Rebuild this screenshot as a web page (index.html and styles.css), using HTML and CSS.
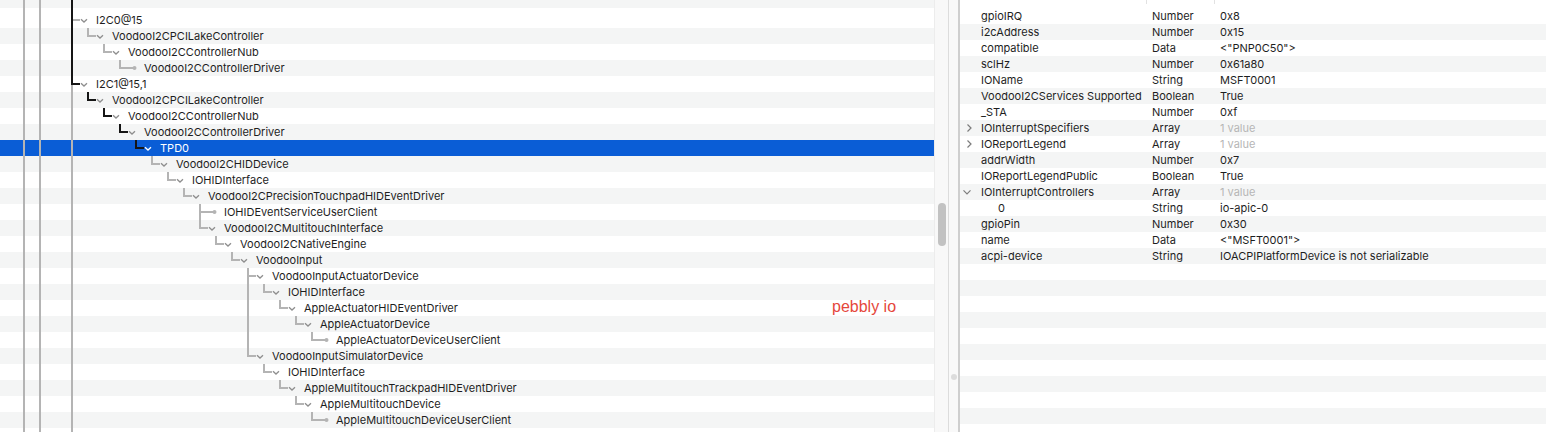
FILE: index.html
```html
<!DOCTYPE html>
<html>
<head>
<meta charset="utf-8">
<link rel="stylesheet" href="styles.css">
</head>
<body>
<div class="app">
  <div class="tree">
    <div class="toprow"><i class="g"></i><i class="g v"></i><i class="g v"></i><i class="g"></i><i class="g vd"></i></div>
    <div class="rows">
      <div class="row"><i class="g"></i><i class="g v"></i><i class="g v"></i><i class="g"></i><i class="g x"></i><i class="tw"><svg viewBox="0 0 16 16"><path d="M1 7.3l3 2.8 3-2.8"/></svg></i><span class="lbl">I2C0@15</span></div>
      <div class="row"><i class="g"></i><i class="g v"></i><i class="g v"></i><i class="g"></i><i class="g vd"></i><i class="g l"></i><i class="tw"><svg viewBox="0 0 16 16"><path d="M1 7.3l3 2.8 3-2.8"/></svg></i><span class="lbl">VoodooI2CPCILakeController</span></div>
      <div class="row"><i class="g"></i><i class="g v"></i><i class="g v"></i><i class="g"></i><i class="g vd"></i><i class="g"></i><i class="g l"></i><i class="tw"><svg viewBox="0 0 16 16"><path d="M1 7.3l3 2.8 3-2.8"/></svg></i><span class="lbl">VoodooI2CControllerNub</span></div>
      <div class="row"><i class="g"></i><i class="g v"></i><i class="g v"></i><i class="g"></i><i class="g vd"></i><i class="g"></i><i class="g"></i><i class="g l"></i><i class="tw leaf"><svg viewBox="0 0 16 16"><path d="M0 8h5"/><circle cx="6.5" cy="8" r="2"/></svg></i><span class="lbl">VoodooI2CControllerDriver</span></div>
      <div class="row"><i class="g"></i><i class="g v"></i><i class="g v"></i><i class="g"></i><i class="g y"></i><i class="tw"><svg viewBox="0 0 16 16"><path d="M1 7.3l3 2.8 3-2.8"/></svg></i><span class="lbl">I2C1@15,1</span></div>
      <div class="row"><i class="g"></i><i class="g v"></i><i class="g v"></i><i class="g"></i><i class="g v"></i><i class="g ld"></i><i class="tw"><svg viewBox="0 0 16 16"><path d="M1 7.3l3 2.8 3-2.8"/></svg></i><span class="lbl">VoodooI2CPCILakeController</span></div>
      <div class="row"><i class="g"></i><i class="g v"></i><i class="g v"></i><i class="g"></i><i class="g v"></i><i class="g"></i><i class="g ld"></i><i class="tw"><svg viewBox="0 0 16 16"><path d="M1 7.3l3 2.8 3-2.8"/></svg></i><span class="lbl">VoodooI2CControllerNub</span></div>
      <div class="row"><i class="g"></i><i class="g v"></i><i class="g v"></i><i class="g"></i><i class="g v"></i><i class="g"></i><i class="g"></i><i class="g ld"></i><i class="tw"><svg viewBox="0 0 16 16"><path d="M1 7.3l3 2.8 3-2.8"/></svg></i><span class="lbl">VoodooI2CControllerDriver</span></div>
      <div class="row sel"><i class="g"></i><i class="g v"></i><i class="g v"></i><i class="g"></i><i class="g v"></i><i class="g"></i><i class="g"></i><i class="g"></i><i class="g ld"></i><i class="tw"><svg viewBox="0 0 16 16"><path d="M1 7.3l3 2.8 3-2.8"/></svg></i><span class="lbl">TPD0</span></div>
      <div class="row"><i class="g"></i><i class="g v"></i><i class="g v"></i><i class="g"></i><i class="g v"></i><i class="g"></i><i class="g"></i><i class="g"></i><i class="g"></i><i class="g l"></i><i class="tw"><svg viewBox="0 0 16 16"><path d="M1 7.3l3 2.8 3-2.8"/></svg></i><span class="lbl">VoodooI2CHIDDevice</span></div>
      <div class="row"><i class="g"></i><i class="g v"></i><i class="g v"></i><i class="g"></i><i class="g v"></i><i class="g"></i><i class="g"></i><i class="g"></i><i class="g"></i><i class="g"></i><i class="g l"></i><i class="tw"><svg viewBox="0 0 16 16"><path d="M1 7.3l3 2.8 3-2.8"/></svg></i><span class="lbl">IOHIDInterface</span></div>
      <div class="row"><i class="g"></i><i class="g v"></i><i class="g v"></i><i class="g"></i><i class="g v"></i><i class="g"></i><i class="g"></i><i class="g"></i><i class="g"></i><i class="g"></i><i class="g"></i><i class="g l"></i><i class="tw"><svg viewBox="0 0 16 16"><path d="M1 7.3l3 2.8 3-2.8"/></svg></i><span class="lbl">VoodooI2CPrecisionTouchpadHIDEventDriver</span></div>
      <div class="row"><i class="g"></i><i class="g v"></i><i class="g v"></i><i class="g"></i><i class="g v"></i><i class="g"></i><i class="g"></i><i class="g"></i><i class="g"></i><i class="g"></i><i class="g"></i><i class="g"></i><i class="g t"></i><i class="tw leaf"><svg viewBox="0 0 16 16"><path d="M0 8h5"/><circle cx="6.5" cy="8" r="2"/></svg></i><span class="lbl">IOHIDEventServiceUserClient</span></div>
      <div class="row"><i class="g"></i><i class="g v"></i><i class="g v"></i><i class="g"></i><i class="g v"></i><i class="g"></i><i class="g"></i><i class="g"></i><i class="g"></i><i class="g"></i><i class="g"></i><i class="g"></i><i class="g l"></i><i class="tw"><svg viewBox="0 0 16 16"><path d="M1 7.3l3 2.8 3-2.8"/></svg></i><span class="lbl">VoodooI2CMultitouchInterface</span></div>
      <div class="row"><i class="g"></i><i class="g v"></i><i class="g v"></i><i class="g"></i><i class="g v"></i><i class="g"></i><i class="g"></i><i class="g"></i><i class="g"></i><i class="g"></i><i class="g"></i><i class="g"></i><i class="g"></i><i class="g l"></i><i class="tw"><svg viewBox="0 0 16 16"><path d="M1 7.3l3 2.8 3-2.8"/></svg></i><span class="lbl">VoodooI2CNativeEngine</span></div>
      <div class="row"><i class="g"></i><i class="g v"></i><i class="g v"></i><i class="g"></i><i class="g v"></i><i class="g"></i><i class="g"></i><i class="g"></i><i class="g"></i><i class="g"></i><i class="g"></i><i class="g"></i><i class="g"></i><i class="g"></i><i class="g l"></i><i class="tw"><svg viewBox="0 0 16 16"><path d="M1 7.3l3 2.8 3-2.8"/></svg></i><span class="lbl">VoodooInput</span></div>
      <div class="row"><i class="g"></i><i class="g v"></i><i class="g v"></i><i class="g"></i><i class="g v"></i><i class="g"></i><i class="g"></i><i class="g"></i><i class="g"></i><i class="g"></i><i class="g"></i><i class="g"></i><i class="g"></i><i class="g"></i><i class="g"></i><i class="g t"></i><i class="tw"><svg viewBox="0 0 16 16"><path d="M1 7.3l3 2.8 3-2.8"/></svg></i><span class="lbl">VoodooInputActuatorDevice</span></div>
      <div class="row"><i class="g"></i><i class="g v"></i><i class="g v"></i><i class="g"></i><i class="g v"></i><i class="g"></i><i class="g"></i><i class="g"></i><i class="g"></i><i class="g"></i><i class="g"></i><i class="g"></i><i class="g"></i><i class="g"></i><i class="g"></i><i class="g v"></i><i class="g l"></i><i class="tw"><svg viewBox="0 0 16 16"><path d="M1 7.3l3 2.8 3-2.8"/></svg></i><span class="lbl">IOHIDInterface</span></div>
      <div class="row"><i class="g"></i><i class="g v"></i><i class="g v"></i><i class="g"></i><i class="g v"></i><i class="g"></i><i class="g"></i><i class="g"></i><i class="g"></i><i class="g"></i><i class="g"></i><i class="g"></i><i class="g"></i><i class="g"></i><i class="g"></i><i class="g v"></i><i class="g"></i><i class="g l"></i><i class="tw"><svg viewBox="0 0 16 16"><path d="M1 7.3l3 2.8 3-2.8"/></svg></i><span class="lbl">AppleActuatorHIDEventDriver</span></div>
      <div class="row"><i class="g"></i><i class="g v"></i><i class="g v"></i><i class="g"></i><i class="g v"></i><i class="g"></i><i class="g"></i><i class="g"></i><i class="g"></i><i class="g"></i><i class="g"></i><i class="g"></i><i class="g"></i><i class="g"></i><i class="g"></i><i class="g v"></i><i class="g"></i><i class="g"></i><i class="g l"></i><i class="tw"><svg viewBox="0 0 16 16"><path d="M1 7.3l3 2.8 3-2.8"/></svg></i><span class="lbl">AppleActuatorDevice</span></div>
      <div class="row"><i class="g"></i><i class="g v"></i><i class="g v"></i><i class="g"></i><i class="g v"></i><i class="g"></i><i class="g"></i><i class="g"></i><i class="g"></i><i class="g"></i><i class="g"></i><i class="g"></i><i class="g"></i><i class="g"></i><i class="g"></i><i class="g v"></i><i class="g"></i><i class="g"></i><i class="g"></i><i class="g l"></i><i class="tw leaf"><svg viewBox="0 0 16 16"><path d="M0 8h5"/><circle cx="6.5" cy="8" r="2"/></svg></i><span class="lbl">AppleActuatorDeviceUserClient</span></div>
      <div class="row"><i class="g"></i><i class="g v"></i><i class="g v"></i><i class="g"></i><i class="g v"></i><i class="g"></i><i class="g"></i><i class="g"></i><i class="g"></i><i class="g"></i><i class="g"></i><i class="g"></i><i class="g"></i><i class="g"></i><i class="g"></i><i class="g l"></i><i class="tw"><svg viewBox="0 0 16 16"><path d="M1 7.3l3 2.8 3-2.8"/></svg></i><span class="lbl">VoodooInputSimulatorDevice</span></div>
      <div class="row"><i class="g"></i><i class="g v"></i><i class="g v"></i><i class="g"></i><i class="g v"></i><i class="g"></i><i class="g"></i><i class="g"></i><i class="g"></i><i class="g"></i><i class="g"></i><i class="g"></i><i class="g"></i><i class="g"></i><i class="g"></i><i class="g"></i><i class="g l"></i><i class="tw"><svg viewBox="0 0 16 16"><path d="M1 7.3l3 2.8 3-2.8"/></svg></i><span class="lbl">IOHIDInterface</span></div>
      <div class="row"><i class="g"></i><i class="g v"></i><i class="g v"></i><i class="g"></i><i class="g v"></i><i class="g"></i><i class="g"></i><i class="g"></i><i class="g"></i><i class="g"></i><i class="g"></i><i class="g"></i><i class="g"></i><i class="g"></i><i class="g"></i><i class="g"></i><i class="g"></i><i class="g l"></i><i class="tw"><svg viewBox="0 0 16 16"><path d="M1 7.3l3 2.8 3-2.8"/></svg></i><span class="lbl">AppleMultitouchTrackpadHIDEventDriver</span></div>
      <div class="row"><i class="g"></i><i class="g v"></i><i class="g v"></i><i class="g"></i><i class="g v"></i><i class="g"></i><i class="g"></i><i class="g"></i><i class="g"></i><i class="g"></i><i class="g"></i><i class="g"></i><i class="g"></i><i class="g"></i><i class="g"></i><i class="g"></i><i class="g"></i><i class="g"></i><i class="g l"></i><i class="tw"><svg viewBox="0 0 16 16"><path d="M1 7.3l3 2.8 3-2.8"/></svg></i><span class="lbl">AppleMultitouchDevice</span></div>
      <div class="row"><i class="g"></i><i class="g v"></i><i class="g v"></i><i class="g"></i><i class="g v"></i><i class="g"></i><i class="g"></i><i class="g"></i><i class="g"></i><i class="g"></i><i class="g"></i><i class="g"></i><i class="g"></i><i class="g"></i><i class="g"></i><i class="g"></i><i class="g"></i><i class="g"></i><i class="g"></i><i class="g l"></i><i class="tw leaf"><svg viewBox="0 0 16 16"><path d="M0 8h5"/><circle cx="6.5" cy="8" r="2"/></svg></i><span class="lbl">AppleMultitouchDeviceUserClient</span></div>
      <div class="row"><i class="g"></i><i class="g v"></i><i class="g v"></i><i class="g"></i><i class="g v"></i></div>
    </div>
  </div>
  <div class="scroll"><div class="thumb"></div></div>
  <div class="split"><span class="knob"></span></div>
  <div class="props">
    <div class="phead"></div>
    <div class="prows">
      <div class="prow"><i class="pc"></i><span>gpioIRQ</span><span>Number</span><span>0x8</span></div>
      <div class="prow"><i class="pc"></i><span>i2cAddress</span><span>Number</span><span>0x15</span></div>
      <div class="prow"><i class="pc"></i><span>compatible</span><span>Data</span><span>&lt;"PNP0C50"&gt;</span></div>
      <div class="prow"><i class="pc"></i><span>sclHz</span><span>Number</span><span>0x61a80</span></div>
      <div class="prow"><i class="pc"></i><span>IOName</span><span>String</span><span>MSFT0001</span></div>
      <div class="prow"><i class="pc"></i><span>VoodooI2CServices Supported</span><span>Boolean</span><span>True</span></div>
      <div class="prow"><i class="pc"></i><span>_STA</span><span>Number</span><span>0xf</span></div>
      <div class="prow"><i class="pc"><svg viewBox="0 0 21 16"><path d="M7.5 4.5L11 8l-3.5 3.5"/></svg></i><span>IOInterruptSpecifiers</span><span>Array</span><span class="dim">1 value</span></div>
      <div class="prow"><i class="pc"><svg viewBox="0 0 21 16"><path d="M7.5 4.5L11 8l-3.5 3.5"/></svg></i><span>IOReportLegend</span><span>Array</span><span class="dim">1 value</span></div>
      <div class="prow"><i class="pc"></i><span>addrWidth</span><span>Number</span><span>0x7</span></div>
      <div class="prow"><i class="pc"></i><span>IOReportLegendPublic</span><span>Boolean</span><span>True</span></div>
      <div class="prow"><i class="pc"><svg viewBox="0 0 21 16"><path d="M3.5 6.3l3.5 3.5 3.5-3.5"/></svg></i><span>IOInterruptControllers</span><span>Array</span><span class="dim">1 value</span></div>
      <div class="prow"><i class="pc"></i><span class="sub">0</span><span>String</span><span>io-apic-0</span></div>
      <div class="prow"><i class="pc"></i><span>gpioPin</span><span>Number</span><span>0x30</span></div>
      <div class="prow"><i class="pc"></i><span>name</span><span>Data</span><span>&lt;"MSFT0001"&gt;</span></div>
      <div class="prow"><i class="pc"></i><span>acpi-device</span><span>String</span><span>IOACPIPlatformDevice is not serializable</span></div>
      <div class="prow"></div>
      <div class="prow"></div>
      <div class="prow"></div>
      <div class="prow"></div>
      <div class="prow"></div>
      <div class="prow"></div>
      <div class="prow"></div>
      <div class="prow"></div>
      <div class="prow"></div>
      <div class="prow"></div>
    </div>
  </div>
  <div class="mark">pebbly io</div>
</div>
</body>
</html>
```

FILE: styles.css
```css
* { box-sizing: border-box; }
html, body { margin: 0; padding: 0; background: #fff; }
body {
  font-family: Inter, "Liberation Sans", Arial, sans-serif;
  font-size: 11px;
  color: #1e1e1e;
}
.app {
  position: relative;
  display: flex;
  width: 1546px;
  height: 432px;
  overflow: hidden;
}

/* ---------- tree ---------- */
.tree {
  --gc: #b4b4b4;
  --dc: #151515;
  flex: none;
  width: 934px;
  display: flex;
  flex-direction: column;
  overflow: hidden;
}
.toprow {
  display: flex;
  flex: none;
  height: 12px;
  background: linear-gradient(#f4f5f5 0 8px, #fff 8px);
}
.rows { display: flex; flex-direction: column; }
.row {
  display: flex;
  flex: none;
  height: 16px;
  line-height: 16px;
  white-space: nowrap;
}
.rows .row:nth-child(even) { background: #f4f5f5; }
.rows .row.sel { background: #0a5dd6; color: #fff; }

.g {
  display: block;
  flex: none;
  width: 16px;
  height: 100%;
  background-repeat: no-repeat;
}
.g.v {
  background-image: linear-gradient(var(--gc), var(--gc));
  background-position: 7px 0;
  background-size: 2px 100%;
}
.g.vd {
  background-image: linear-gradient(var(--dc), var(--dc));
  background-position: 7px 0;
  background-size: 2px 100%;
}
.g.l {
  background-image: linear-gradient(var(--gc), var(--gc)), linear-gradient(var(--gc), var(--gc));
  background-position: 7px 0, 7px 7px;
  background-size: 2px 9px, 9px 2px;
}
.g.ld {
  background-image: linear-gradient(var(--dc), var(--dc)), linear-gradient(var(--dc), var(--dc));
  background-position: 7px 0, 7px 7px;
  background-size: 2px 9px, 9px 2px;
}
.g.t {
  background-image: linear-gradient(var(--gc), var(--gc)), linear-gradient(var(--gc), var(--gc));
  background-position: 7px 0, 7px 7px;
  background-size: 2px 100%, 9px 2px;
}
.g.x {
  background-image: linear-gradient(var(--dc), var(--dc)), linear-gradient(var(--gc), var(--gc));
  background-position: 7px 0, 9px 7px;
  background-size: 2px 100%, 7px 2px;
}
.g.y {
  background:
    linear-gradient(var(--dc), var(--dc)) 7px 0 / 2px 9px no-repeat,
    linear-gradient(var(--dc), var(--dc)) 7px 7px / 9px 2px no-repeat,
    linear-gradient(var(--gc), var(--gc)) 7px 9px / 2px 7px no-repeat;
}

.tw { display: block; flex: none; width: 16px; height: 16px; }
.tw svg {
  display: block;
  width: 16px;
  height: 16px;
  fill: none;
  stroke: #8e8e8e;
  stroke-width: 1.3;
}
.tw.leaf svg path { stroke: var(--gc); stroke-width: 2; }
.tw.leaf svg circle { fill: var(--gc); stroke: none; }
.row.sel .tw svg { stroke: #fff; }
.lbl { display: block; }

/* ---------- scroller + split ---------- */
.scroll {
  flex: none;
  width: 15px;
  height: 432px;
  background: #f8f8f8;
  border-left: 1px solid #ececec;
  border-right: 1px solid #dcdcdc;
  padding: 203px 0 0 3px;
}
.thumb {
  width: 8px;
  height: 43px;
  border-radius: 4px;
  background: #c2c2c2;
}
.split {
  flex: none;
  width: 11px;
  height: 432px;
  background: #f9f9f9;
  border-right: 2px solid #cfcfcf;
  padding: 374px 0 0 2px;
}
.knob {
  display: block;
  width: 6px;
  height: 6px;
  border-radius: 50%;
  background: #dcdcdc;
}

/* ---------- properties ---------- */
.props {
  flex: 1;
  display: flex;
  flex-direction: column;
  overflow: hidden;
}
.phead {
  flex: none;
  height: 8px;
  background:
    linear-gradient(#e2e2e2, #e2e2e2) 186px 0 / 1px 4px no-repeat,
    linear-gradient(#e2e2e2, #e2e2e2) 254px 0 / 1px 4px no-repeat;
}
.prows { display: flex; flex-direction: column; }
.prow {
  display: grid;
  grid-template-columns: 21px 171px 68px 1fr;
  flex: none;
  height: 16px;
  line-height: 16px;
  white-space: nowrap;
}
.prows .prow:nth-child(even) { background: #f4f5f5; }
.pc { display: block; }
.pc svg {
  display: block;
  width: 21px;
  height: 16px;
  fill: none;
  stroke: #7c7c7c;
  stroke-width: 1.2;
}
.sub { padding-left: 17px; }
.dim { color: #b6b6b6; }

/* ---------- watermark ---------- */
.mark {
  position: absolute;
  left: 832px;
  top: 298px;
  font-family: "Liberation Sans", Arial, sans-serif;
  font-size: 16px;
  line-height: 18px;
  color: #e5473b;
}
```
